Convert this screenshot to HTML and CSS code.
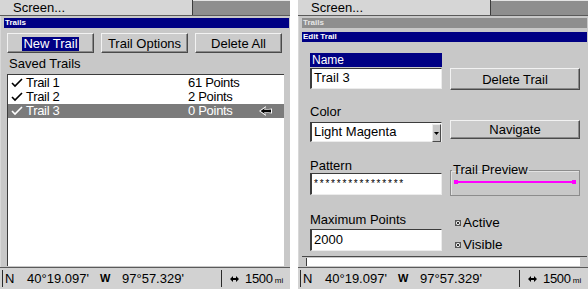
FILE: index.html
```html
<!DOCTYPE html>
<html lang="en">
<head>
  <meta charset="UTF-8">
  <title>Trails</title>
  <link rel="stylesheet" href="styles.css">
</head>
<body>

  <!-- Trails list screen -->
  <div class="screen">
    <div class="topbar">
      <div class="tab">Screen...</div>
      <div class="tab-rest"></div>
    </div>
    <div class="window">
      <div class="titlebar">Trails</div>
      <div class="btn-row">
        <button class="btn"><span class="focus">New Trail</span></button>
        <button class="btn">Trail Options</button>
        <button class="btn">Delete All</button>
      </div>
      <div class="label">Saved Trails</div>
      <ul class="trail-list">
        <li>
          <svg class="check" width="12" height="10" viewBox="0 0 12 10"><polyline points="1,5 4,8 11,1" fill="none" stroke="currentColor" stroke-width="1.6"/></svg>
          <span class="name">Trail 1</span><span class="pts">61 Points</span>
        </li>
        <li>
          <svg class="check" width="12" height="10" viewBox="0 0 12 10"><polyline points="1,5 4,8 11,1" fill="none" stroke="currentColor" stroke-width="1.6"/></svg>
          <span class="name">Trail 2</span><span class="pts">2 Points</span>
        </li>
        <li class="selected">
          <svg class="check" width="12" height="10" viewBox="0 0 12 10"><polyline points="1,5 4,8 11,1" fill="none" stroke="currentColor" stroke-width="1.6"/></svg>
          <span class="name">Trail 3</span><span class="pts">0 Points</span>
          <svg class="pointer" width="14" height="10" viewBox="0 0 14 10"><polygon points="0,5 7,0 6,3.5 13,2.5 13,7.5 6,6.5 7,10" fill="#fff"/><polygon points="1.5,5 6,2 5.2,4 12,3.5 12,6.5 5.2,6 6,8" fill="#000"/></svg>
        </li>
      </ul>
    </div>
    <div class="status">
      <div class="coords">
        <span class="s-n">N</span><span class="s-lat">40°19.097'</span><span class="s-w">W</span><span class="s-lon">97°57.329'</span>
      </div>
      <div class="scale">
        <svg width="9" height="6" viewBox="0 0 9 6"><polygon points="0,3 3,0 3,2 6,2 6,0 9,3 6,6 6,4 3,4 3,6" fill="#000"/></svg>
        <span class="dist">1500</span><span class="unit">mi</span>
      </div>
    </div>
  </div>

  <!-- Edit trail screen -->
  <div class="screen">
    <div class="topbar">
      <div class="tab">Screen...</div>
      <div class="tab-rest"></div>
    </div>
    <div class="window">
      <div class="titlebar inactive">Trails</div>
      <div class="titlebar dialog-title">Edit Trail</div>
      <div class="dialog">
        <div class="col col-left">
          <div class="field-head">Name</div>
          <div class="input name-input">Trail 3</div>
          <div class="field-label color-label">Color</div>
          <div class="input select">
            <span>Light Magenta</span>
            <span class="drop"><svg width="5" height="3" viewBox="0 0 5 3"><polygon points="0,0 5,0 2.5,3" fill="#000"/></svg></span>
          </div>
          <div class="field-label pattern-label">Pattern</div>
          <div class="input pattern">****************</div>
          <div class="field-label max-label">Maximum Points</div>
          <div class="input max-input">2000</div>
        </div>
        <div class="col col-right">
          <button class="btn wide delete-btn">Delete Trail</button>
          <button class="btn wide nav-btn">Navigate</button>
          <fieldset class="preview">
            <legend>Trail Preview</legend>
            <div class="preview-line"></div>
          </fieldset>
          <div class="check-row first">
            <svg width="6" height="6" viewBox="0 0 6 6"><rect x="0.5" y="0.5" width="5" height="5" fill="#e8e8e8" stroke="#555"/><path d="M1.5 1.5 L4.5 4.5 M4.5 1.5 L1.5 4.5" stroke="#333"/></svg>
            Active
          </div>
          <div class="check-row">
            <svg width="6" height="6" viewBox="0 0 6 6"><rect x="0.5" y="0.5" width="5" height="5" fill="#e8e8e8" stroke="#555"/><path d="M1.5 1.5 L4.5 4.5 M4.5 1.5 L1.5 4.5" stroke="#333"/></svg>
            Visible
          </div>
        </div>
      </div>
      <div class="list-edge"></div>
    </div>
    <div class="status">
      <div class="coords">
        <span class="s-n">N</span><span class="s-lat">40°19.097'</span><span class="s-w">W</span><span class="s-lon">97°57.329'</span>
      </div>
      <div class="scale">
        <svg width="9" height="6" viewBox="0 0 9 6"><polygon points="0,3 3,0 3,2 6,2 6,0 9,3 6,6 6,4 3,4 3,6" fill="#000"/></svg>
        <span class="dist">1500</span><span class="unit">mi</span>
      </div>
    </div>
  </div>

</body>
</html>
```

FILE: styles.css
```css
body {
  margin: 0;
  background-color: #fff;
  display: flex;
  gap: 8px;
  font-family: "Liberation Sans", Arial, sans-serif;
  font-size: 13px;
  color: #000;
}
.screen {
  width: 290px;
  height: 289px;
  display: flex;
  flex-direction: column;
  background-color: #c8c8c8;
  overflow: hidden;
}

/* top menu strip */
.topbar {
  height: 15px;
  display: flex;
  border-bottom: 1px solid #5a5a5a;
}
.tab {
  width: 179px;
  padding-left: 13px;
  line-height: 15px;
  background-color: #d6d6d6;
  border-right: 1px solid #3c3c3c;
}
.tab-rest {
  flex: 1;
  background-color: #8e8e8e;
  border-top: 1px solid #e4e4e4;
}

/* window area */
.window {
  flex: 1;
  display: flex;
  flex-direction: column;
  padding: 2px 1px 0 3px;
  min-height: 0;
  border-left: 1px solid #d8d8d8;
}
.titlebar {
  height: 10px;
  line-height: 10px;
  padding-left: 1px;
  background-color: #000084;
  color: #fff;
  font-size: 8px;
  font-weight: bold;
}
.titlebar.inactive {
  background-color: #8e8e8e;
  color: #e6e6e6;
}
.dialog-title {
  margin-top: 4px;
}

/* buttons */
.btn {
  font-family: inherit;
  font-size: 13px;
  color: #000;
  background-color: #cbcbcb;
  border: 1px solid;
  border-color: #f2f2f2 #4a4a4a #4a4a4a #f2f2f2;
  box-shadow: inset -1px -1px 0 #8a8a8a;
  padding: 0;
  margin: 0;
}
.btn-row {
  display: flex;
  gap: 7px;
  margin: 5px 0 0 3px;
}
.btn-row .btn {
  width: 87px;
  height: 20px;
}
.focus {
  background-color: #000084;
  color: #fff;
  padding: 0 1px;
  line-height: 14px;
  display: inline-block;
}

/* saved trails list */
.label {
  margin: 3px 0 2px 5px;
  line-height: 16px;
}
.trail-list {
  flex: 1;
  list-style: none;
  margin: 0 5px 1px 3px;
  padding: 1px 0 0 0;
  background-color: #fff;
  border-top: 1px solid #3c3c3c;
  border-left: 1px solid #3c3c3c;
}
.trail-list li {
  display: flex;
  align-items: center;
  height: 14px;
  line-height: 14px;
  padding-left: 3px;
  letter-spacing: -0.3px;
}
.trail-list .check {
  margin-right: 3px;
}
.trail-list .name {
  width: 162px;
}
.trail-list .selected {
  background-color: #7b7b7b;
  color: #fff;
}
.pointer {
  margin-left: 26px;
}

/* edit trail dialog */
.dialog {
  height: 214px;
  display: flex;
  gap: 8px;
  padding-left: 8px;
  border-bottom: 1px solid #4a4a4a;
}
.col {
  display: flex;
  flex-direction: column;
}
.col-left {
  width: 132px;
}
.col-right {
  width: 130px;
}
.field-head {
  margin-top: 11px;
  height: 14px;
  line-height: 14px;
  padding-left: 2px;
  background-color: #000084;
  color: #fff;
  font-size: 12px;
}
.input {
  background-color: #fff;
  border-top: 1px solid #3c3c3c;
  border-left: 2px solid #3c3c3c;
  border-right: 1px solid #ececec;
  border-bottom: 1px solid #ececec;
  padding-left: 2px;
}
.name-input {
  margin-top: 1px;
  height: 19px;
  line-height: 17px;
}
.field-label {
  line-height: 15px;
}
.color-label {
  margin-top: 15px;
  line-height: 16px;
}
.select {
  margin-top: 2px;
  height: 18px;
  line-height: 18px;
  display: flex;
  justify-content: space-between;
}
.drop {
  width: 7px;
  height: 16px;
  margin-top: 1px;
  border-left: 1px solid #ececec;
  border-top: 1px solid #ececec;
  border-right: 1px solid #4a4a4a;
  border-bottom: 1px solid #4a4a4a;
  background-color: #c8c8c8;
  display: flex;
  align-items: center;
  justify-content: center;
}
.pattern-label {
  margin-top: 16px;
}
.pattern {
  height: 20px;
  line-height: 20px;
  font-size: 10px;
  letter-spacing: 1.8px;
}
.max-label {
  margin-top: 17px;
}
.max-input {
  margin-top: 2px;
  height: 20px;
  line-height: 19px;
}
.btn.wide {
  width: 130px;
}
.delete-btn {
  margin-top: 26px;
  height: 22px;
}
.nav-btn {
  margin-top: 30px;
  height: 19px;
}
.preview {
  margin: 24px 0 0 0;
  padding: 4px 4px 12px 4px;
  border: 1px solid #8c8c8c;
  box-shadow: inset 1px 1px 0 #e2e2e2;
}
.preview legend {
  padding: 0 1px;
  margin-left: -3px;
  line-height: 14px;
}
.preview-line {
  height: 2px;
  background-color: #ff00ff;
  position: relative;
}
.preview-line::before,
.preview-line::after {
  content: "";
  position: absolute;
  top: -1px;
  width: 4px;
  height: 4px;
  background-color: #ff00ff;
}
.preview-line::before {
  left: -1px;
}
.preview-line::after {
  right: -1px;
}
.check-row {
  display: flex;
  align-items: center;
  gap: 2px;
  line-height: 16px;
  padding-left: 5px;
  margin-top: 6px;
  font-size: 13.5px;
}
.check-row.first {
  margin-top: 19px;
}
.list-edge {
  height: 8px;
  margin: 1px 7px 1px 4px;
  background-color: #fff;
  border-left: 1px solid #3c3c3c;
}

/* bottom status bar */
.status {
  height: 21px;
  line-height: 21px;
  display: flex;
  background-color: #d2d2d2;
  border-top: 1px solid #5a5a5a;
  padding-left: 2px;
}
.coords {
  display: flex;
  border-left: 1px solid #2a2a2a;
  border-right: 1px solid #2a2a2a;
  padding-left: 2px;
  height: 17px;
  line-height: 17px;
  margin-top: 2px;
}
.s-n {
  width: 22px;
}
.s-lat {
  width: 73px;
}
.s-w {
  width: 22px;
  font-size: 11px;
  font-weight: bold;
}
.s-lon {
  width: 99px;
}
.scale {
  display: flex;
  align-items: center;
  padding-left: 8px;
}
.dist {
  margin-left: 6px;
  letter-spacing: -0.3px;
}
.unit {
  font-size: 8px;
  margin-left: 2px;
  margin-top: 3px;
}
```
